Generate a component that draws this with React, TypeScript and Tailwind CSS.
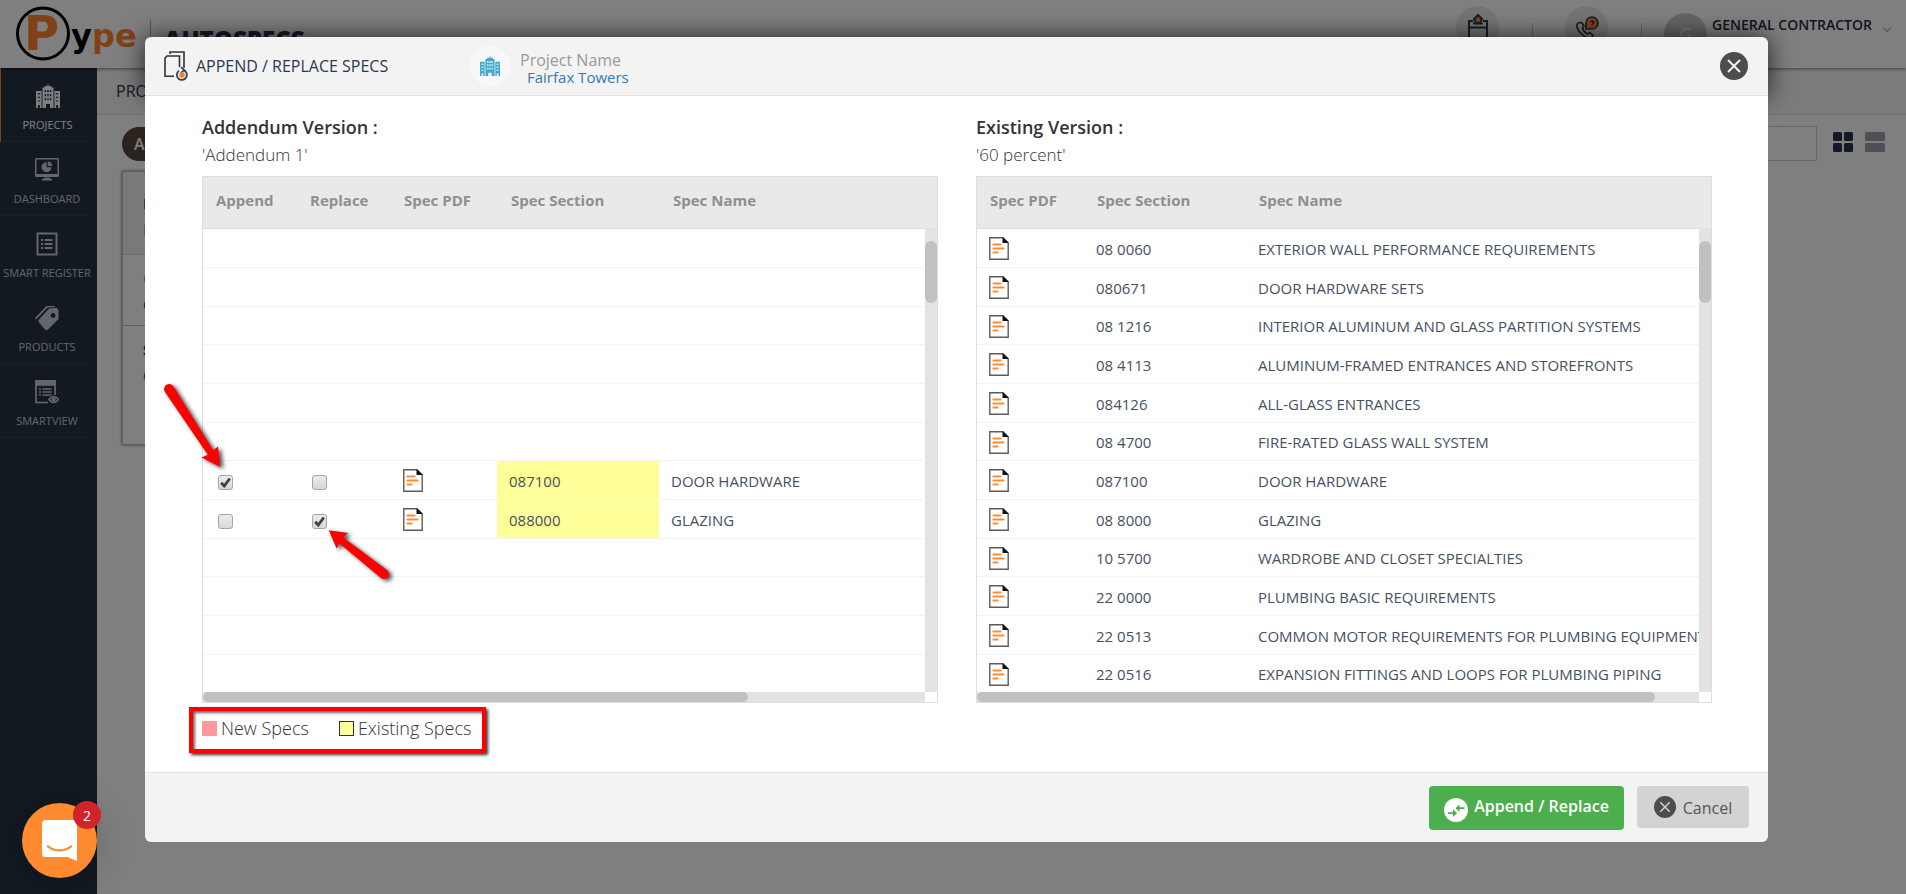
import type { ReactNode } from "react";

const BuildingIcon = ({ className }: { className?: string }) => (
  <svg viewBox="0 0 24 24" className={className} fill="currentColor" aria-hidden="true">
    <path
      fillRule="evenodd"
      d="M11.500 0h1v2h3v1.500h2V24h-3.500v-4h-4v4H6.500V3.500h2V2h3zM8.700 6v2.300h1.400V6zm2.600 0v2.300h1.400V6zm2.600 0v2.300h1.400V6zM8.700 10v2.300h1.400V10zm2.600 0v2.300h1.400V10zm2.600 0v2.300h1.400V10zM8.700 14v2.300h1.400V14zm2.600 0v2.300h1.400V14zm2.600 0v2.300h1.400V14z"
    />
    <path fillRule="evenodd" d="M0 7h5.600v17H3.900v-3H1.900v3H0zM1.700 9.200v1.200h2.500V9.200zm0 3.600V14h2.500v-1.200zm0 3.600v1.200h2.500v-1.200z" />
    <path fillRule="evenodd" d="M18.400 7H24v17h-1.900v-3h-2v3h-1.700zM19.800 9.200v1.200h2.500V9.200zm0 3.600V14h2.500v-1.200zm0 3.600v1.200h2.500v-1.200z" />
  </svg>
);

const DashboardIcon = () => (
  <svg viewBox="0 0 24 24" className="size-6" fill="currentColor" aria-hidden="true">
    <path fillRule="evenodd" d="M1.500 0h21A1.500 1.500 0 0 1 24 1.500v16a1.500 1.500 0 0 1-1.500 1.500h-21A1.500 1.500 0 0 1 0 17.500v-16A1.500 1.500 0 0 1 1.500 0zM1.500 1.500V16h21V1.500z" />
    <path d="M8 21l2-1.500h4l2 1.500h1v1.500H7V21z" />
    <path d="M11.500 4.200v5h5a5 5 0 1 1-5-5z" />
    <path d="M12.700 3.500a4.800 4.800 0 0 1 4.600 4.600h-4.600z" />
  </svg>
);

const RegisterIcon = () => (
  <svg viewBox="0 0 24 24" className="size-6" fill="none" stroke="currentColor" strokeWidth="2" aria-hidden="true">
    <rect x="2.500" y="1.500" width="19" height="21" />
    <path d="M9.500 8h8M9.500 12h8M9.500 16h8M6 8h2M6 12h2M6 16h2" />
  </svg>
);

const TagIcon = () => (
  <svg viewBox="0 0 24 24" className="size-6" fill="currentColor" aria-hidden="true">
    <path fillRule="evenodd" d="M14 2.500 21.500 1.800 23.500 4v9L13 23.500q-1.500 1-3 0L4 16.500q-1-1.500 0-3zM18 7a2.500 2.500 0 1 0 .1 5A2.500 2.500 0 0 0 18 7z" />
    <path d="M11.500 0h8.500v1L12.500 1.500 1 13.500l-1-1.500z" />
  </svg>
);

const SmartviewIcon = () => (
  <svg viewBox="0 0 24 24" className="size-6" fill="none" stroke="currentColor" strokeWidth="1.700" aria-hidden="true">
    <path d="M1 0.500h19v4.500H1z" fill="currentColor" />
    <path d="M1 1v21.500h12M20 1v14" />
    <path d="M7.500 9h9M7.500 12h9M7.500 15h9M4 9h2M4 12h2M4 15h2" />
    <path d="M14 19.500q4.500-6 9.500 0-5 6-9.500 0z" />
    <circle cx="18.700" cy="19.500" r="1.200" />
  </svg>
);

const CircleX = ({ className }: { className?: string }) => (
  <svg viewBox="0 0 28 28" className={className} aria-hidden="true">
    <circle cx="14" cy="14" r="14" fill="#4d4d4d" />
    <path d="M8 8l12 12M20 8L8 20" stroke="currentColor" strokeWidth="1.800" fill="none" />
  </svg>
);

const DocIcon = () => (
  <svg viewBox="0 0 20 23" className="block h-[23px] w-5" aria-hidden="true">
    <path d="M0.800 0.800H14L19.200 6v16.200H0.800z" fill="#fff" stroke="#5c5c5c" strokeWidth="1.400" />
    <path d="M13.500 0l6.500 6h-6.500z" fill="#111" />
    <path d="M4.500 7.500h7M4.500 11.500h10M4.500 15.500h4" stroke="#ff8c2e" strokeWidth="2.200" strokeLinecap="round" />
  </svg>
);

const navItems: { label: string; icon: ReactNode }[] = [
  { label: "PROJECTS", icon: <BuildingIcon className="size-6" /> },
  { label: "DASHBOARD", icon: <DashboardIcon /> },
  { label: "SMART REGISTER", icon: <RegisterIcon /> },
  { label: "PRODUCTS", icon: <TagIcon /> },
  { label: "SMARTVIEW", icon: <SmartviewIcon /> },
];

type Spec = { section: string; name: string; append?: boolean; replace?: boolean };

const existing: Spec[] = [
  { section: "08 0060", name: "EXTERIOR WALL PERFORMANCE REQUIREMENTS" },
  { section: "080671", name: "DOOR HARDWARE SETS" },
  { section: "08 1216", name: "INTERIOR ALUMINUM AND GLASS PARTITION SYSTEMS" },
  { section: "08 4113", name: "ALUMINUM-FRAMED ENTRANCES AND STOREFRONTS" },
  { section: "084126", name: "ALL-GLASS ENTRANCES" },
  { section: "08 4700", name: "FIRE-RATED GLASS WALL SYSTEM" },
  { section: "087100", name: "DOOR HARDWARE" },
  { section: "08 8000", name: "GLAZING" },
  { section: "10 5700", name: "WARDROBE AND CLOSET SPECIALTIES" },
  { section: "22 0000", name: "PLUMBING BASIC REQUIREMENTS" },
  { section: "22 0513", name: "COMMON MOTOR REQUIREMENTS FOR PLUMBING EQUIPMENT" },
  { section: "22 0516", name: "EXPANSION FITTINGS AND LOOPS FOR PLUMBING PIPING" },
];

const addendum: (Spec | null)[] = [
  null,
  null,
  null,
  null,
  null,
  null,
  { section: "087100", name: "DOOR HARDWARE", append: true },
  { section: "088000", name: "GLAZING", replace: true },
  null,
  null,
  null,
  null,
];

const Tick = ({ label, checked }: { label: string; checked?: boolean }) => (
  <label className="ml-[2px] mt-[6px] grid size-[15px] place-items-center">
    <input
      type="checkbox"
      aria-label={label}
      defaultChecked={checked}
      className="peer col-start-1 row-start-1 size-[15px] appearance-none rounded-[3px] border border-[#a6a6a6] bg-linear-to-b from-[#ececec] to-[#d8d8d8]"
    />
    <svg viewBox="0 0 15 15" className="pointer-events-none invisible col-start-1 row-start-1 size-[15px] peer-checked:visible" aria-hidden="true">
      <path d="M3.200 7.800l3 3.200L11.800 3.500" fill="none" stroke="#404040" strokeWidth="2.800" />
    </svg>
  </label>
);

const Th = ({ children, className = "pl-[14px]" }: { children: ReactNode; className?: string }) => (
  <th className={`pb-[4px] text-left text-[15px] font-bold text-[#8f8f8f] ${className}`}>{children}</th>
);

const rowClass = "h-[39px] border-b border-[#f3f3f3] [&:nth-child(3n)]:h-[38px]";

const Panel = ({ title, version, thumb, children }: { title: string; version: string; thumb: string; children: ReactNode }) => (
  <section className="min-w-0 flex-1">
    <h2 className="text-[18px] leading-[26px] font-semibold text-[#333]">{title}</h2>
    <p className="mt-[2px] mb-[8px] text-[17px] leading-[26px] font-light text-[#333]">{version}</p>
    <div className="relative h-[527px] overflow-hidden border border-[#dedede]">
      {children}
      <div className="absolute top-[51px] right-0 bottom-[10px] w-3 bg-[#e3e3e3]">
        <div className="mt-[13px] h-[62px] rounded-full bg-[#c1c1c1]" />
      </div>
      <div className="absolute right-0 bottom-0 left-0 flex h-[10px] bg-white">
        <div className="flex-1 bg-[#e3e3e3]">
          <div className={`h-full rounded-full bg-[#c1c1c1] ${thumb}`} />
        </div>
        <div className="w-3" />
      </div>
    </div>
  </section>
);

const TopBar = () => (
  <header className="relative flex h-[68px] items-start bg-white shadow-[0_1px_3px_rgba(0,0,0,0.5)]">
    <svg viewBox="0 0 150 68" className="h-[68px] w-[150px]" role="img" aria-label="Pype">
      <circle cx="43" cy="33.500" r="25.500" fill="none" stroke="#000" strokeWidth="3" />
      <text x="24" y="50" fontFamily="DejaVu Sans" fontWeight="700" fontSize="48" fill="#ff8330">P</text>
      <text x="71" y="47" fontFamily="DejaVu Sans" fontWeight="700" fontSize="32" fill="#000">y</text>
      <text x="92" y="47" fontFamily="DejaVu Sans" fontWeight="700" fontSize="32" fill="#ff8330">pe</text>
    </svg>
    <div className="mt-5 h-10 w-px bg-[#b0b0b0]" />
    <h1 className="mt-[23px] ml-[13px] text-[24px] leading-[34px] font-extrabold text-[#26344a]">AUTOSPECS</h1>
    <div className="ml-auto flex items-start pr-[14px]">
      <button aria-label="Clipboard" className="mt-[6px] grid size-[43px] place-items-center rounded-full bg-[#ebebeb]">
        <svg viewBox="0 0 24 28" className="h-7 w-6" fill="none" stroke="#2b3a52" strokeWidth="2" aria-hidden="true">
          <path d="M7 7H3v19h18V7h-4" />
          <path d="M3 13.500h18M7 9.500h10" />
          <path d="M12 1l4 4-2 4h-4L8 5z" fill="#ff8330" />
        </svg>
      </button>
      <div className="mt-[23px] mr-8 ml-[33px] h-8 w-px bg-[#ccc]" />
      <button aria-label="Support" className="mt-[6px] grid size-[43px] place-items-center rounded-full bg-[#ebebeb]">
        <svg viewBox="0 0 24 24" className="size-6" fill="none" stroke="#2b3a52" strokeWidth="1.700" aria-hidden="true">
          <path d="M3 7C1 9 1.500 13 6 17.500S15 23 17 21.500l1-2-3-3-2.500 1.500C10.500 17 8 14 7.500 12L9 10 6.500 6.500z" />
          <path d="M11 13V7a6 6 0 1 1 6 6z" fill="#ff8330" />
          <path d="M15.500 6q1.500-2 3 0c.5 1.500-1.500 1.500-1.500 3" />
        </svg>
      </button>
      <div className="mt-[23px] mr-[22px] ml-[33px] h-8 w-px bg-[#ccc]" />
      <span className="mt-[13px] grid size-[43px] place-items-center rounded-full bg-[#cacaca] text-[18px] font-semibold text-[#eee]">G</span>
      <span className="mt-[15px] ml-[5px] text-[14px] leading-5 font-semibold text-[#1f2c3f]">GENERAL CONTRACTOR</span>
      <svg viewBox="0 0 10 6" className="mt-[27px] ml-[10px] h-[6px] w-[10px]" fill="none" stroke="#bbb" strokeWidth="1.500" aria-hidden="true">
        <path d="M1 0.500l4 4 4-4" />
      </svg>
    </div>
  </header>
);

const Backdrop = () => (
  <div className="flex min-h-screen flex-col bg-white">
    <TopBar />
    <div className="flex flex-1">
      <nav className="w-[97px] bg-[#263342] pr-[3px]">
        {navItems.map((item, i) => (
          <a
            key={item.label}
            href="#"
            className={`flex h-[74px] flex-col items-center justify-between border-b border-[#2c3c50] pt-[16px] pb-[7px] text-[11px] leading-[18px] whitespace-nowrap ${
              i === 0 ? "border-l border-l-[#ff8330] text-white" : "text-[#c9cdd2]"
            }`}
          >
            {item.icon}
            {item.label}
          </a>
        ))}
      </nav>
      <main className="min-w-0 flex-1">
        <div className="flex h-[47px] items-center border-b border-[#dedede] bg-[#f6f6f6] pl-[19px] text-[16px] text-[#26344a]">PROJECTS</div>
        <div className="mt-[11px] flex items-center pr-[21px] pl-[25px]">
          <button className="h-[34px] rounded-full bg-[#54463c] px-3 text-[16px] font-semibold text-white">All</button>
          <input aria-label="Search" className="ml-auto h-[35px] w-[260px] border border-[#cfcfcf]" />
          <div className="flex gap-3 pb-1 pl-4">
            <svg viewBox="0 0 20 20" className="size-5" fill="#26344a" aria-hidden="true">
              <rect width="9" height="9" rx="1.500" />
              <rect x="11" width="9" height="9" rx="1.500" />
              <rect y="11" width="9" height="9" rx="1.500" />
              <rect x="11" y="11" width="9" height="9" rx="1.500" />
            </svg>
            <svg viewBox="0 0 20 20" className="size-5" fill="#9aa3ab" aria-hidden="true">
              <rect width="20" height="9" rx="1.500" />
              <rect y="11" width="20" height="9" rx="1.500" />
            </svg>
          </div>
        </div>
        <article className="mt-[10px] ml-[25px] h-[274px] w-[420px] border border-[#bbb] text-[15px] leading-[26px] shadow-[0_0_3px_rgba(0,0,0,0.6)]">
          <div className="h-[83px] border-b border-[#ddd] bg-[#f2f2f2] pt-[18px] pl-[20px]">
            <h3 className="font-bold text-[#26344a]">Fairfax</h3>
            <p className="text-[#337ab7]">Edit</p>
          </div>
          <div className="h-[71px] border-b border-[#bbb] pt-[10px] pl-[20px]">
            <p className="text-[#b58e6e]">Client</p>
            <p className="text-[#26344a]">GC</p>
          </div>
          <div className="pt-[10px] pl-[20px]">
            <p className="font-bold text-[#222]">Specs</p>
            <p className="text-[#26507a]">60</p>
          </div>
        </article>
      </main>
    </div>
  </div>
);

const Arrows = () => (
  <svg
    viewBox="0 0 260 220"
    className="pointer-events-none absolute top-[274px] left-1 h-[220px] w-[260px] drop-shadow-[3px_2px_2px_rgba(0,0,0,0.7)]"
    fill="#f00"
    aria-hidden="true"
  >
    <path d="M15.800 21.800A5 5 0 0 1 24.500 16.500L64.200 80.300 69 76.500l2.300 20.500-19-9.500 6.500-2.800z" />
    <path d="M179.700 160.300l19.500 2.800-5 4.500 43.800 32.500a5 5 0 0 1-6 8L190.300 173.300l-2.500 5.500z" />
  </svg>
);

export default function App() {
  return (
    <div className="relative font-['Open_Sans',sans-serif]">
      <Backdrop />
      <div className="absolute inset-0 bg-black/50 pt-[37px] pr-[138px] pl-[145px]">
        <div role="dialog" aria-label="Append / Replace Specs" className="rounded-[6px]">
          <div className="flex h-[59px] items-center rounded-t-[6px] border-b border-[#e1e1e1] bg-[#f3f3f3] pr-5 pl-[19px] shadow-[0_0_24px_rgba(0,0,0,0.75)]">
            <svg viewBox="0 0 24 30" className="h-[30px] w-6" fill="none" stroke="#333" strokeWidth="1.600" aria-hidden="true">
              <path d="M10 25.200H1V7L3 5h12.500v11" />
              <path d="M6 3V1h14v16" />
              <path d="M15 19.800a5 5 0 1 0 4.500-.6" stroke="#2f3f5c" strokeWidth="1.800" />
              <path d="M17 16.200l3.200 2.900-3.200 2.700" stroke="#2f3f5c" />
              <circle cx="18" cy="24" r="2.800" fill="#ff7d26" stroke="none" />
            </svg>
            <h2 className="ml-2 w-[270px] text-[16px] text-[#2b3850]">APPEND / REPLACE SPECS</h2>
            <span className="ml-[4px] grid size-10 place-items-center rounded-full bg-[#f8f8f8]">
              <BuildingIcon className="size-5 text-[#3fa9d0]" />
            </span>
            <div className="ml-[10px] pt-[4px]">
              <div className="text-[16px] leading-[18px] text-[#999]">Project Name</div>
              <a href="#" className="ml-[7px] block text-[15px] leading-[17px] text-[#337ab7]">Fairfax Towers</a>
            </div>
            <button aria-label="Close" className="ml-auto">
              <CircleX className="block size-7 text-white" />
            </button>
          </div>

          <div className="relative flex h-[676px] flex-col bg-white pt-[18px] pr-[56px] pl-[57px]">
            <div className="flex gap-[38px]">
              <Panel title="Addendum Version :" version="'Addendum 1'" thumb="w-[545px]">
                <table className="w-full table-fixed border-collapse text-[15px] whitespace-nowrap text-[#46505f]">
                  <colgroup>
                    <col className="w-[94px]" />
                    <col className="w-[94px]" />
                    <col className="w-[106px]" />
                    <col className="w-[162px]" />
                    <col />
                  </colgroup>
                  <thead>
                    <tr className="h-[51px] border-b border-[#dedede] bg-[#e9e9e9]">
                      <Th className="pl-[13px]">Append</Th>
                      <Th className="pl-[13px]">Replace</Th>
                      <Th className="pl-[13px]">Spec PDF</Th>
                      <Th>Spec Section</Th>
                      <Th>Spec Name</Th>
                    </tr>
                  </thead>
                  <tbody>
                    {addendum.map((row, i) => (
                      <tr key={i} className={rowClass}>
                        {row ? (
                          <>
                            <td className="py-0 pl-[13px]">
                              <Tick label={`Append ${row.section}`} checked={row.append} />
                            </td>
                            <td className="py-0 pl-[13px]">
                              <Tick label={`Replace ${row.section}`} checked={row.replace} />
                            </td>
                            <td className="pt-[2px] pb-0 pl-3">
                              <DocIcon />
                            </td>
                            <td className="bg-[#ffff99] pt-[3px] pb-0 pl-3">{row.section}</td>
                            <td className="pt-[3px] pb-0 pl-3">{row.name}</td>
                          </>
                        ) : (
                          <td colSpan={5} />
                        )}
                      </tr>
                    ))}
                  </tbody>
                </table>
              </Panel>
              <Panel title="Existing Version :" version="'60 percent'" thumb="w-[678px]">
                <table className="w-full table-fixed border-collapse text-[15px] whitespace-nowrap text-[#46505f]">
                  <colgroup>
                    <col className="w-[106px]" />
                    <col className="w-[162px]" />
                    <col />
                  </colgroup>
                  <thead>
                    <tr className="h-[51px] border-b border-[#dedede] bg-[#e9e9e9]">
                      <Th className="pl-[13px]">Spec PDF</Th>
                      <Th>Spec Section</Th>
                      <Th>Spec Name</Th>
                    </tr>
                  </thead>
                  <tbody>
                    {existing.map((row) => (
                      <tr key={row.section} className={rowClass}>
                        <td className="pt-[2px] pb-0 pl-3">
                          <DocIcon />
                        </td>
                        <td className="pt-[3px] pb-0 pl-[13px]">{row.section}</td>
                        <td className="overflow-hidden pt-[3px] pb-0 pl-[13px]">{row.name}</td>
                      </tr>
                    ))}
                  </tbody>
                </table>
              </Panel>
            </div>
            <div className="mt-1 -ml-[13px] flex h-[46px] items-center self-start border-4 border-[#f00] pr-[11px] pb-[4px] pl-[9px] text-[18px] font-light text-[#333] shadow-[2px_2px_3px_rgba(0,0,0,0.8),inset_2px_2px_3px_rgba(0,0,0,0.6)]">
              <span className="mr-1 size-[15px] bg-[#ff9999]" />
              New Specs
              <span className="mr-1 ml-[30px] size-[15px] border border-[#333] bg-[#ffff99]" />
              Existing Specs
            </div>
            <Arrows />
          </div>

          <div className="flex h-[70px] items-start justify-end gap-[13px] rounded-b-[6px] border-t border-[#e1e1e1] bg-[#f3f3f3] pt-[13px] pr-[19px]">
            <button className="flex h-11 w-[195px] items-center justify-center gap-[6px] rounded-[4px] bg-[#4cae4c] text-[16px] font-semibold text-white">
              <svg viewBox="0 0 24 24" className="mt-[3px] size-6" aria-hidden="true">
                <circle cx="12" cy="12" r="12" fill="#fff" />
                <path d="M4 14.300h5v-3l4 3.900-4 3.900v-3H4zM20.500 9.300h-5v-3l-4 3.900 4 3.900v-3h5z" fill="#4cae4c" />
              </svg>
              <span className="pb-1">Append / Replace</span>
            </button>
            <button className="flex h-[42px] w-[112px] items-center justify-center gap-[7px] rounded-[4px] bg-[#d3d3d3] text-[16px] text-[#555]">
              <CircleX className="size-[22px] text-[#d3d3d3]" />
              <span className="pt-[2px]">Cancel</span>
            </button>
          </div>
        </div>
      </div>

      <button
        aria-label="Open messages"
        className="absolute bottom-4 left-[22px] grid size-[75px] place-items-center rounded-full bg-[#ff8a30] shadow-[0_2px_40px_rgba(0,0,0,0.2)]"
      >
        <svg viewBox="0 0 36 42" className="h-[41px] w-[35px]" aria-hidden="true">
          <path d="M4 0h28a4 4 0 0 1 4 4v38l-10-4H4a4 4 0 0 1-4-4V4a4 4 0 0 1 4-4z" fill="#fff" />
          <path d="M6 27q12 8.500 24 0" fill="none" stroke="#ff8a30" strokeWidth="2.200" strokeLinecap="round" />
        </svg>
        <span className="absolute -top-[2px] -right-[4px] grid size-7 place-items-center rounded-full bg-[#d0242a] text-[14px] text-white">2</span>
      </button>
    </div>
  );
}
